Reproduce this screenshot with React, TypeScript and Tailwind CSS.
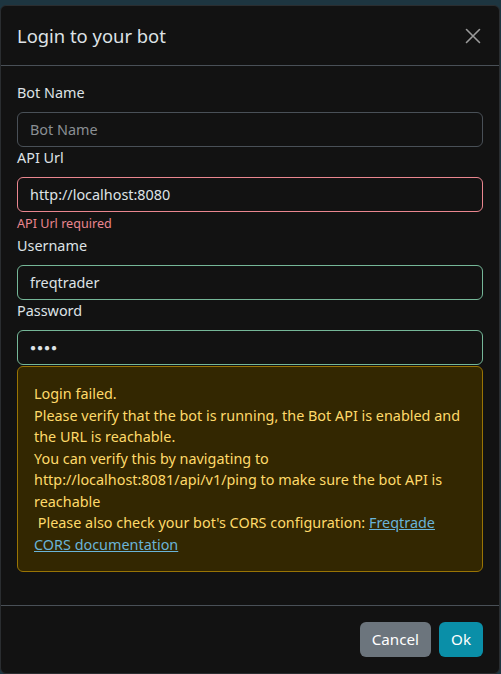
import React from "react";

export default function App() {
  const font = { fontFamily: '"Noto Sans", "Open Sans", sans-serif' };
  return (
    <div className="w-[501px] h-[674px] bg-[#1d3540] overflow-hidden pt-[5px]" style={font}>
      <div className="w-[500px] h-[669px] bg-[#121212] rounded-[6px] border border-[#2a2d30] flex flex-col text-[#dee2e6]">
        {/* Header */}
        <div className="h-[60px] shrink-0 flex items-center justify-between pl-[16px] pr-[14px] border-b border-[#495057]">
          <h5 className="text-[18.4px] leading-[28px] font-normal text-[#dee2e6] mt-[0px]">Login to your bot</h5>
          <button className="w-[24px] h-[24px] flex items-center justify-center text-[#9a9a9a]">
            <svg width="16" height="16" viewBox="0 0 16 16" fill="none" stroke="currentColor" strokeWidth="1.6" strokeLinecap="round">
              <path d="M1.5 1.5 L14.5 14.5 M14.5 1.5 L1.5 14.5" />
            </svg>
          </button>
        </div>
        {/* Body */}
        <div className="px-[16px] pt-[16px] flex flex-col text-[14.4px] leading-[21px]">
          <label className="block h-[21px] mb-[9px]">Bot Name</label>
          <div className="h-[35px] shrink-0 rounded-[6px] border border-[#495057] flex items-center px-[12px] text-[#8a8f94]">Bot Name</div>
          <label className="block h-[21px] mt-0 mb-[9px]">API Url</label>
          <div className="h-[35px] shrink-0 rounded-[6px] border border-[#ea868f] flex items-center px-[12px]">http://localhost:8080</div>
          <div className="h-[18px] text-[12.6px] leading-[18px] mt-[3px] text-[#ea868f]">API Url required</div>
          <label className="block h-[21px] mt-[2px] mb-[9px]">Username</label>
          <div className="h-[35px] shrink-0 rounded-[6px] border border-[#75b798] flex items-center px-[12px]">freqtrader</div>
          <label className="block h-[21px] mt-0 mb-[9px]">Password</label>
          <div className="h-[35px] shrink-0 rounded-[6px] border border-[#75b798] flex items-center px-[12px] text-[10px] tracking-[1px]">●●●●</div>
          <div className="mt-[1px] mb-[33px] rounded-[6px] border border-[#997404] bg-[#332701] text-[#ffda6a] px-[16px] pt-[16px] pb-[16px] leading-[21.5px]">
            Login failed.
            <br />
            Please verify that the bot is running, the Bot API is enabled and the URL is reachable.
            <br />
            You can verify this by navigating to http://localhost:8081/api/v1/ping to make sure the bot API is reachable
            <br />
            &nbsp;Please also check your bot's CORS configuration:{" "}
            <a className="underline text-[#6ab4d8]" href="#">
              Freqtrade CORS documentation
            </a>
          </div>
        </div>
        {/* Footer */}
        <div className="border-t border-[#495057] flex justify-end gap-[8px] px-[16px] pt-[16px] text-[15.2px]">
          <button className="h-[35px] px-[12px] rounded-[6px] bg-[#6c757d] text-white">Cancel</button>
          <button className="h-[35px] px-[12px] rounded-[6px] bg-[#0a8fa8] text-white">Ok</button>
        </div>
      </div>
    </div>
  );
}
